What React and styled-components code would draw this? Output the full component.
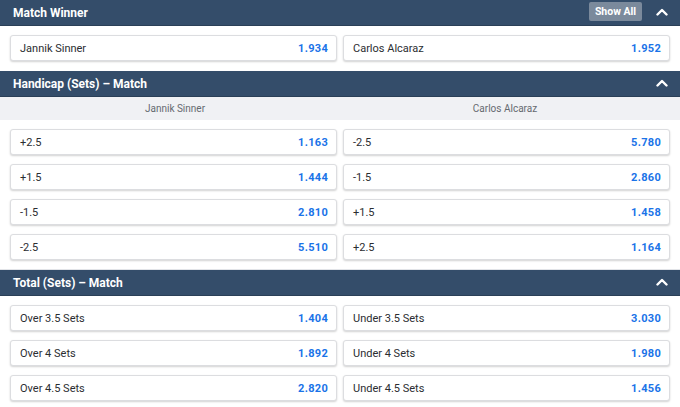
import React from "react";
import styled, { createGlobalStyle } from "styled-components";

const GlobalStyle = createGlobalStyle`
  body {
    margin: 0;
    background: #ffffff;
    font-family: Roboto, "Liberation Sans", Arial, sans-serif;
  }
`;

const markets = [
  {
    title: "Match Winner",
    showAll: true,
    rows: [
      [
        { label: "Jannik Sinner", odds: "1.934" },
        { label: "Carlos Alcaraz", odds: "1.952" },
      ],
    ],
  },
  {
    title: "Handicap (Sets) – Match",
    columns: ["Jannik Sinner", "Carlos Alcaraz"],
    divider: true,
    rows: [
      [
        { label: "+2.5", odds: "1.163" },
        { label: "-2.5", odds: "5.780" },
      ],
      [
        { label: "+1.5", odds: "1.444" },
        { label: "-1.5", odds: "2.860" },
      ],
      [
        { label: "-1.5", odds: "2.810" },
        { label: "+1.5", odds: "1.458" },
      ],
      [
        { label: "-2.5", odds: "5.510" },
        { label: "+2.5", odds: "1.164" },
      ],
    ],
  },
  {
    title: "Total (Sets) – Match",
    rows: [
      [
        { label: "Over 3.5 Sets", odds: "1.404" },
        { label: "Under 3.5 Sets", odds: "3.030" },
      ],
      [
        { label: "Over 4 Sets", odds: "1.892" },
        { label: "Under 4 Sets", odds: "1.980" },
      ],
      [
        { label: "Over 4.5 Sets", odds: "2.820" },
        { label: "Under 4.5 Sets", odds: "1.456" },
      ],
    ],
  },
];

const Chevron = () => (
  <svg width="12" height="8" viewBox="0 0 12 8">
    <polyline
      points="1.5,6.5 6,2 10.5,6.5"
      fill="none"
      stroke="#ffffff"
      strokeWidth="2.4"
      strokeLinecap="round"
      strokeLinejoin="round"
    />
  </svg>
);

const App = () => {
  return (
    <Page>
      <GlobalStyle />
      {markets.map(({ title, showAll, columns, divider, rows }) => (
        <Market key={title}>
          <Header>
            <Title>{title}</Title>
            <Actions>
              {showAll && <ShowAll>Show All</ShowAll>}
              <Toggle>
                <Chevron />
              </Toggle>
            </Actions>
          </Header>
          {columns && (
            <Columns>
              {columns.map((c) => (
                <span key={c}>{c}</span>
              ))}
            </Columns>
          )}
          <Body $divider={divider}>
            {rows.map((row, i) => (
              <Row key={i}>
                {row.map(({ label, odds }) => (
                  <Outcome key={label + odds}>
                    <span>{label}</span>
                    <Odds>{odds}</Odds>
                  </Outcome>
                ))}
              </Row>
            ))}
          </Body>
        </Market>
      ))}
    </Page>
  );
};

export default App;

const Page = styled.div`
  width: 680px;
  background: #ffffff;
`;

const Market = styled.section`
  display: flex;
  flex-direction: column;
`;

const Header = styled.div`
  height: 26px;
  background: #344d6a;
  display: flex;
  align-items: center;
  justify-content: space-between;
  padding: 0 12px 0 13px;
  border-bottom: 1px solid #2a3f57;
  box-sizing: border-box;
`;

const Title = styled.h3`
  margin: 0;
  color: #ffffff;
  font-size: 12px;
  font-weight: 700;
`;

const Actions = styled.div`
  display: flex;
  align-items: center;
  gap: 14px;
`;

const ShowAll = styled.button`
  height: 19px;
  width: 53px;
  padding: 0;
  background: #7b8a9c;
  border: none;
  border-radius: 2px;
  color: #ffffff;
  font-family: Roboto, "Liberation Sans", Arial, sans-serif;
  font-size: 10.5px;
  font-weight: 700;
  margin-top: -2px;
`;

const Toggle = styled.span`
  display: flex;
  align-items: center;
  width: 12px;
  margin-top: -2px;
`;

const Columns = styled.div`
  display: grid;
  grid-template-columns: 1fr 1fr;
  height: 23px;
  align-items: center;
  background: #f0f1f4;
  color: #666a70;
  font-size: 10px;
  text-align: center;
  padding: 0 10px;
`;

const Body = styled.div`
  display: flex;
  flex-direction: column;
  gap: 9px;
  padding: 9px 10px 9px;
  border-bottom: 1px solid ${({ $divider }) => ($divider ? "#e2e4e8" : "transparent")};
`;

const Row = styled.div`
  display: grid;
  grid-template-columns: 1fr 1fr;
  gap: 6px;
`;

const Outcome = styled.div`
  height: 26px;
  box-sizing: border-box;
  display: flex;
  align-items: center;
  justify-content: space-between;
  padding: 0 8px 0 9px;
  background: #ffffff;
  border: 1px solid #dcdde0;
  border-radius: 3px;
  box-shadow: 0 1px 2px rgba(0, 0, 0, 0.18);
  color: #2b2d31;
  font-size: 11px;
`;

const Odds = styled.span`
  color: #1a73e8;
  font-weight: 700;
  font-size: 11px;
  letter-spacing: 0.3px;
`;
